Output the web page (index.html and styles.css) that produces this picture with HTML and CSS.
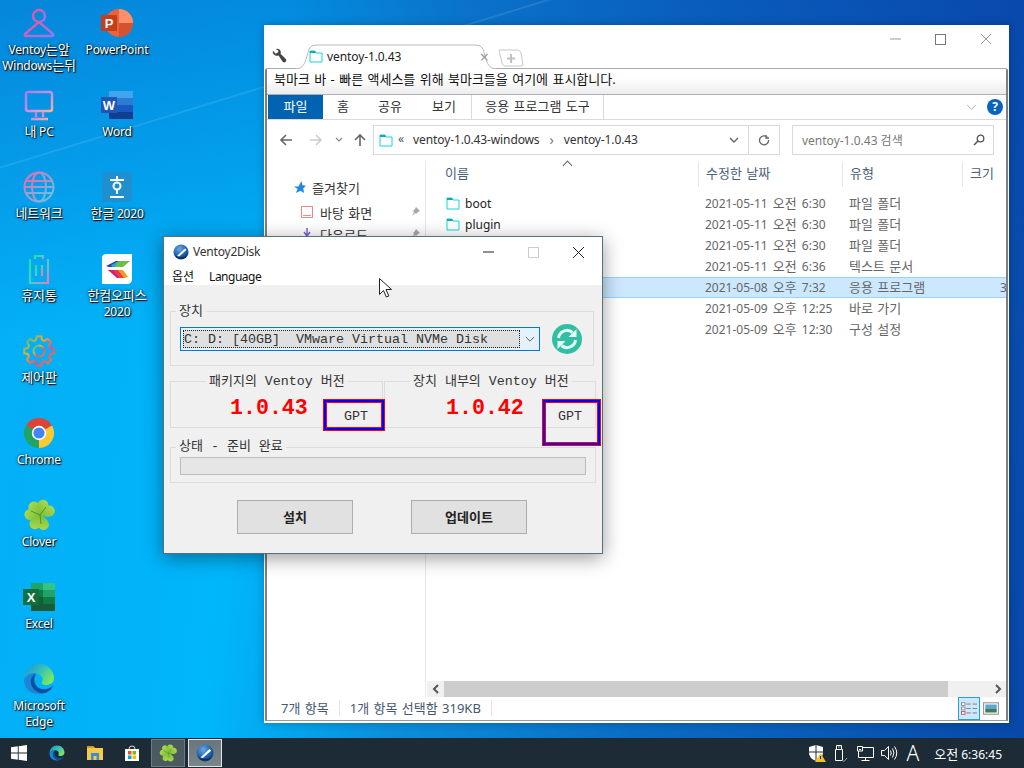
FILE: index.html
```html
<!DOCTYPE html>
<html lang="ko">
<head>
<meta charset="utf-8">
<title>Ventoy2Disk</title>
<link rel="stylesheet" href="styles.css">
</head>
<body>
<svg class="defs" width="0" height="0" aria-hidden="true">
  <defs>
    <linearGradient id="gUser" x1="0" y1="0" x2="1" y2="1"><stop offset="0" stop-color="#f0529a"/><stop offset="1" stop-color="#8d7cf0"/></linearGradient>
    <linearGradient id="gPc" x1="0" y1="0" x2="1" y2="1"><stop offset="0" stop-color="#a57cf5"/><stop offset=".6" stop-color="#d58fe0"/><stop offset="1" stop-color="#f5b39a"/></linearGradient>
    <linearGradient id="gNet" x1="0" y1="0" x2="1" y2="1"><stop offset="0" stop-color="#f06aa8"/><stop offset="1" stop-color="#5fc6e8"/></linearGradient>
    <linearGradient id="gBin" x1="0" y1="0" x2="1" y2="1"><stop offset="0" stop-color="#1fe0a0"/><stop offset=".5" stop-color="#3cd6c8"/><stop offset="1" stop-color="#f07ab0"/></linearGradient>
    <linearGradient id="gGear" x1="0" y1="0" x2="1" y2="1"><stop offset="0" stop-color="#18c0a8"/><stop offset=".35" stop-color="#f0b020"/><stop offset=".65" stop-color="#f04a80"/><stop offset="1" stop-color="#f58a20"/></linearGradient>
    <linearGradient id="gClover" x1="0" y1="0" x2="0" y2="1"><stop offset="0" stop-color="#a8d850"/><stop offset="1" stop-color="#7cc038"/></linearGradient>
    <linearGradient id="gEdgeB" x1="0" y1="0" x2="1" y2=".6"><stop offset="0" stop-color="#1a8fd8"/><stop offset=".55" stop-color="#35c1b8"/><stop offset="1" stop-color="#78e860"/></linearGradient>
    <radialGradient id="gVentoy" cx=".4" cy=".3" r=".8"><stop offset="0" stop-color="#6fa8e0"/><stop offset=".6" stop-color="#1a5fb0"/><stop offset="1" stop-color="#0b2f66"/></radialGradient>
    <symbol id="folder" viewBox="0 0 14 13"><path d="M1 1h5l1 2h6v9H1z" fill="#fff" stroke="#14d6dc"/><path d="M1 1h5l1 2H1z" fill="#14a8b0"/></symbol>
    <symbol id="clover" viewBox="0 0 32 32">
      <path d="M17 16 6 28" stroke="#5c9a24" stroke-width="1.300"/>
      <path d="M17 16C11 14 6 10 7.500 5c1.500-4 7-5 9.500-1.500C19.500 0 25 1 26.500 5c1.500 5-3.500 9-9.500 11z" fill="url(#gClover)" transform="rotate(42 17 16)"/>
      <path d="M17 16C11 14 6 10 7.500 5c1.500-4 7-5 9.500-1.500C19.500 0 25 1 26.500 5c1.500 5-3.500 9-9.500 11z" fill="url(#gClover)" transform="rotate(-62 17 16)"/>
      <path d="M17 16C11 14 6 10 7.500 5c1.500-4 7-5 9.500-1.500C19.500 0 25 1 26.500 5c1.500 5-3.500 9-9.500 11z" fill="url(#gClover)" transform="rotate(185 17 16)"/>
      <path d="M17 16 23 8M17 16 8 12M17 16l1 9" stroke="#4c8a1e" stroke-width=".9"/>
    </symbol>
    <symbol id="edge" viewBox="0 0 32 32">
      <path d="M1 17C1 8 8 1 16 1c9 0 15 7 15 14 0 5-4 7-8 7-3 0-5-1-4-3 2-4-1-8-6-8.500C7 10 3 12 1 17z" fill="url(#gEdgeB)"/>
      <path d="M1 17c2-5 7-7.500 12-6.500-4 1.500-6 6-5 10.500 1 5 6 9 12 9.500-1.500.5-3 .5-4 .5C7 31 1 25 1 17z" fill="#1b86d8"/>
      <path d="M20 30.500C14 30 9 26 8 21c-1-4.500 1-8.500 5-10.500-1.500 3-2.500 7-.5 11 2 3.500 6 5.500 11 4.500 3-.5 5-2 7-4-2 4.500-5 7.500-11 8.500z" fill="#0d4f9e"/>
    </symbol>
    <symbol id="ventoy" viewBox="0 0 16 16">
      <circle cx="8" cy="8" r="7.500" fill="url(#gVentoy)"/>
      <path d="M4 12 12 4.500 13.500 6 6 12.500z" fill="#fff"/>
      <path d="M2 11c3 3 9 3 12 0-2 5-10 5-12 0z" fill="#0a2a5c"/>
    </symbol>
  </defs>
</svg>

<main class="desktop">
  <div class="icon-grid">
    <div class="dicon">
      <svg class="dicon-img" viewBox="0 0 32 32"><circle cx="16" cy="9" r="6" fill="none" stroke="url(#gUser)" stroke-width="2.400"/><path d="M16 15 2 27q-1 2 1 2h26q2 0 1-2z" fill="none" stroke="url(#gUser)" stroke-width="2.400" stroke-linejoin="round"/></svg>
      <span class="dicon-label">Ventoy<span class="k">는앞</span> Windows<span class="k">는뒤</span></span>
    </div>
    <div class="dicon">
      <svg class="dicon-img" viewBox="0 0 32 32"><path d="M28 20V5q0-2-2-2H4Q2 3 2 5v15q0 2 2 2h22q2 0 2-2z" fill="none" stroke="url(#gPc)" stroke-width="2.400" transform="translate(1 0)"/><path d="M13 23v5M20 23v5M8 30h17" stroke="url(#gPc)" stroke-width="2.400" fill="none"/></svg>
      <span class="dicon-label"><span class="k">내</span> PC</span>
    </div>
    <div class="dicon">
      <svg class="dicon-img" viewBox="0 0 32 32"><g fill="none" stroke="url(#gNet)" stroke-width="2"><circle cx="16" cy="16" r="14.500"/><ellipse cx="16" cy="16" rx="7" ry="14.500"/><path d="M16 1.500v29"/><path d="M3 10h26M3 22h26M1.500 16h29"/></g></svg>
      <span class="dicon-label"><span class="k">네트워크</span></span>
    </div>
    <div class="dicon">
      <svg class="dicon-img" viewBox="0 0 32 32"><g fill="none" stroke="url(#gBin)" stroke-width="2.200"><path d="M4 6h24"/><path d="M12 6V3h8v3"/><path d="M7 6v24h18V6"/><path d="M13 12v11M19 12v11"/></g></svg>
      <span class="dicon-label"><span class="k">휴지통</span></span>
    </div>
    <div class="dicon">
      <svg class="dicon-img" viewBox="0 0 32 32"><g fill="none" stroke="url(#gGear)" stroke-width="2"><path d="M13.020 4.890 13.650 1.180H18.350L18.980 4.890 21.750 6.040 24.820 3.870 28.130 7.180 25.960 10.250 27.110 13.020 30.820 13.650V18.350L27.110 18.980 25.960 21.750 28.130 24.820 24.820 28.130 21.750 25.960 18.980 27.110 18.350 30.820H13.650L13.020 27.110 10.250 25.960 7.180 28.130 3.870 24.820 6.040 21.750 4.890 18.980 1.180 18.350V13.650L4.890 13.020 6.040 10.250 3.870 7.180 7.180 3.870 10.250 6.040z" stroke-linejoin="round"/><circle cx="16" cy="16" r="5.500"/></g></svg>
      <span class="dicon-label"><span class="k">제어판</span></span>
    </div>
    <div class="dicon">
      <svg class="dicon-img" viewBox="0 0 32 32"><path d="M16 16 3 8.500A15 15 0 0 1 29 8.500z" fill="#db4437"/><path d="M16 16 29 8.500A15 15 0 0 1 16 31z" fill="#fcc934"/><path d="M16 16V31A15 15 0 0 1 3 8.500z" fill="#1fa463"/><circle cx="16" cy="16" r="7.200" fill="#fff"/><circle cx="16" cy="16" r="5.600" fill="#4285f4"/></svg>
      <span class="dicon-label">Chrome</span>
    </div>
    <div class="dicon">
      <svg class="dicon-img"><use href="#clover"/></svg>
      <span class="dicon-label">Clover</span>
    </div>
    <div class="dicon">
      <svg class="dicon-img" viewBox="0 0 32 32"><rect x="8" y="2" width="24" height="28" fill="#185c37"/><rect x="8" y="2" width="12" height="7" fill="#21a366"/><rect x="20" y="2" width="12" height="7" fill="#33c481"/><rect x="8" y="9" width="12" height="7" fill="#107c41"/><rect x="20" y="9" width="12" height="7" fill="#21a366"/><rect x="20" y="16" width="12" height="7" fill="#107c41"/><rect y="8" width="16" height="16" fill="#0f7040"/><text x="8" y="21" class="letter">X</text></svg>
      <span class="dicon-label">Excel</span>
    </div>
    <div class="dicon">
      <svg class="dicon-img"><use href="#edge"/></svg>
      <span class="dicon-label">Microsoft Edge</span>
    </div>
    <div class="dicon">
      <svg class="dicon-img" viewBox="0 0 32 32"><circle cx="18" cy="16" r="14" fill="#e8643c"/><path d="M18 2a14 14 0 0 1 14 14H18z" fill="#ff8f6b"/><path d="M18 16h14a14 14 0 0 1-14 14z" fill="#d35230"/><rect y="8" width="16" height="16" rx="1" fill="#c43e1c"/><text x="8" y="21" class="letter">P</text></svg>
      <span class="dicon-label">PowerPoint</span>
    </div>
    <div class="dicon">
      <svg class="dicon-img" viewBox="0 0 32 32"><rect x="8" y="2" width="24" height="7" fill="#41a5ee"/><rect x="8" y="9" width="24" height="7" fill="#2b7cd3"/><rect x="8" y="16" width="24" height="7" fill="#185abd"/><rect x="8" y="23" width="24" height="7" fill="#103f91"/><rect y="8" width="16" height="16" fill="#1f56b8"/><text x="8" y="21" class="letter">W</text></svg>
      <span class="dicon-label">Word</span>
    </div>
    <div class="dicon">
      <svg class="dicon-img" viewBox="0 0 32 32"><path d="M5 1h26v25q0 5-5 5H1V5q0-4 4-4z" fill="#1f8fcf"/><path d="M16 5v3M9 9h14" stroke="#fff" stroke-width="2"/><circle cx="16" cy="15" r="3.500" fill="none" stroke="#fff" stroke-width="2"/><path d="M16 19v4M9 26h14" stroke="#fff" stroke-width="2"/></svg>
      <span class="dicon-label"><span class="k">한글</span> 2020</span>
    </div>
    <div class="dicon">
      <svg class="dicon-img" viewBox="0 0 32 32"><path d="M5 1h26v25q0 5-5 5H1V5q0-4 4-4z" fill="#fff"/><path d="M5 13 15 8h7l-8 6H8z" fill="#2e3f9e"/><path d="M10 12 18 8h6l-7 6h-6z" fill="#2e9fd8"/><path d="M16 9 20 8h9l-7 6h-8z" fill="#6cc04a"/><path d="M7 17h10l6 8h-7z" fill="#d81b70"/><path d="M12 17h6l6 8h-6z" fill="#e8384f"/><path d="M17 17h5l5 7-4 1z" fill="#f59a1b"/></svg>
      <span class="dicon-label"><span class="k">한컴오피스</span> 2020</span>
    </div>
  </div>

  <section class="explorer">
    <header class="tabstrip">
      <svg class="wrench" viewBox="0 0 16 16"><path d="M1 3l3 3 2-1 1-2-3-2q4-1 5 2 1 2 0 3l6 6q1 2-1 3-1 1-3-1L7 8Q4 9 2 7 0 5 1 3z" fill="#444"/></svg>
      <div class="tab">
        <svg class="tab-shape" viewBox="0 0 202 25" preserveAspectRatio="none"><path d="M0 25C6 25 9 22 11 15L14 5Q16 1 21 1H181Q186 1 188 5L191 15C193 22 196 25 202 25" fill="#fff" stroke="#bbb"/></svg>
        <svg class="tab-icon"><use href="#folder"/></svg>
        <span class="tab-text">ventoy-1.0.43</span>
        <span class="tab-close">×</span>
      </div>
      <svg class="newtab" viewBox="0 0 26 18"><path d="M1 1h19q2 0 3 3l2 12q0 1-1 1H7q-2 0-3-3z" fill="#fff" stroke="#c8c8c8"/><path d="M13 5v9M9 9.500h8" stroke="#c0c0c0" stroke-width="2"/></svg>
      <div class="wincontrols">
        <svg class="winbtn" viewBox="0 0 45 28"><path d="M17 14h11" stroke="#999"/></svg>
        <svg class="winbtn" viewBox="0 0 45 28"><rect x="17.500" y="9.500" width="10" height="10" fill="none" stroke="#777"/></svg>
        <svg class="winbtn" viewBox="0 0 45 28"><path d="M18 9l10 10M28 9 18 19" stroke="#999"/></svg>
      </div>
    </header>

    <div class="frame">
      <div class="bookmarks k">북마크 바 - 빠른 액세스를 위해 북마크들을 여기에 표시합니다.</div>

      <nav class="ribbon">
        <span class="rtab rtab-file k">파일</span>
        <span class="rtab rtab-home k">홈</span>
        <span class="rtab rtab-share k">공유</span>
        <span class="rtab rtab-view k">보기</span>
        <span class="rtab rtab-tools k">응용 프로그램 도구</span>
        <svg class="ribbon-chevron" viewBox="0 0 12 8"><path d="M1 1l5 5 5-5" fill="none" stroke="#aaa"/></svg>
        <span class="help">?</span>
      </nav>

      <div class="addressrow">
        <svg class="nav-arrow" viewBox="0 0 14 14"><path d="M13 7H2M7 2 2 7l5 5" fill="none" stroke="#666" stroke-width="1.600"/></svg>
        <svg class="nav-arrow nav-forward" viewBox="0 0 14 14"><path d="M1 7h11M7 2l5 5-5 5" fill="none" stroke="#ccc" stroke-width="1.600"/></svg>
        <svg class="nav-down" viewBox="0 0 8 6"><path d="M1 1l3 3 3-3" fill="none" stroke="#888" stroke-width="1.200"/></svg>
        <svg class="nav-arrow nav-up" viewBox="0 0 14 14"><path d="M7 13V2M2 7l5-5 5 5" fill="none" stroke="#666" stroke-width="1.600"/></svg>
        <div class="addressbox">
          <svg class="crumb-icon"><use href="#folder"/></svg>
          <span class="crumb-more">«</span>
          <span class="crumb">ventoy-1.0.43-windows</span>
          <span class="crumb-sep">›</span>
          <span class="crumb">ventoy-1.0.43</span>
          <span class="addr-drop"><svg class="addr-chev" viewBox="0 0 10 7"><path d="M1 1l4 4 4-4" fill="none" stroke="#666" stroke-width="1.400"/></svg></span>
          <span class="addr-refresh"><svg class="addr-ref" viewBox="0 0 12 12"><path d="M9.500 3.500A4.500 4.500 0 1 0 10.500 6M8 1v3h3" fill="none" stroke="#666" stroke-width="1.300"/></svg></span>
        </div>
        <div class="searchbox">
          <span class="search-text">ventoy-1.0.43 검색</span>
          <svg class="search-icon" viewBox="0 0 12 12"><circle cx="7.500" cy="4.500" r="3.300" fill="none" stroke="#555" stroke-width="1.300"/><path d="M5 7 1 11" stroke="#555" stroke-width="1.600"/></svg>
        </div>
      </div>

      <div class="content">
        <aside class="navpane">
          <div class="nav-row nav-fav">
            <svg class="nav-star" viewBox="0 0 14 14"><path d="M9 0l1.200 4.500L14 5l-3 3 1 5-4-2.500L3 13l2-4.500L1 6h5z" fill="#1e88e5"/></svg>
            <span class="k">즐겨찾기</span>
          </div>
          <div class="nav-row nav-sub">
            <svg class="nav-icon" viewBox="0 0 12 12"><rect x=".5" y=".5" width="11" height="11" fill="#fff" stroke="#f08a80"/><path d="M2 9.500h8" stroke="#f08a80"/></svg>
            <span class="k">바탕 화면</span>
            <svg class="nav-pin" viewBox="0 0 10 10"><path d="M6 0l4 4-2 1-2 2-1-1-3 3 2-4-1-1 2-2z" fill="#a8a8a8"/></svg>
          </div>
          <div class="nav-row nav-sub">
            <svg class="nav-icon" viewBox="0 0 12 12"><path d="M6 0v7M3 4l3 4 3-4M1 11h10" fill="none" stroke="#7a5ad0" stroke-width="1.400"/></svg>
            <span class="k">다운로드</span>
            <svg class="nav-pin" viewBox="0 0 10 10"><path d="M6 0l4 4-2 1-2 2-1-1-3 3 2-4-1-1 2-2z" fill="#a8a8a8"/></svg>
          </div>
        </aside>

        <div class="list">
          <span class="sort-arrow"></span>
          <div class="list-head">
            <span class="col-name k">이름</span>
            <span class="col k">수정한 날짜</span>
            <span class="col k">유형</span>
            <span class="col k">크기</span>
          </div>
          <div class="rows">
            <div class="row"><span class="name"><svg class="row-icon"><use href="#folder"/></svg>boot</span><span class="cell date">2021-05-11 <span class="k">오전</span> 6:30</span><span class="cell k">파일 폴더</span><span class="cell"></span></div>
            <div class="row"><span class="name"><svg class="row-icon"><use href="#folder"/></svg>plugin</span><span class="cell date">2021-05-11 <span class="k">오전</span> 6:30</span><span class="cell k">파일 폴더</span><span class="cell"></span></div>
            <div class="row"><span class="name"></span><span class="cell date">2021-05-11 <span class="k">오전</span> 6:30</span><span class="cell k">파일 폴더</span><span class="cell"></span></div>
            <div class="row"><span class="name"></span><span class="cell date">2021-05-11 <span class="k">오전</span> 6:36</span><span class="cell k">텍스트 문서</span><span class="cell"></span></div>
            <div class="row row-selected"><span class="name"></span><span class="cell date">2021-05-08 <span class="k">오후</span> 7:32</span><span class="cell k">응용 프로그램</span><span class="cell cell-size">319KB</span></div>
            <div class="row"><span class="name"></span><span class="cell date">2021-05-09 <span class="k">오후</span> 12:25</span><span class="cell k">바로 가기</span><span class="cell"></span></div>
            <div class="row"><span class="name"></span><span class="cell date">2021-05-09 <span class="k">오후</span> 12:30</span><span class="cell k">구성 설정</span><span class="cell"></span></div>
          </div>
          <div class="hscroll">
            <span class="hs-btn"><svg class="hs-arrow" viewBox="0 0 8 10"><path d="M6 1 2 5l4 4" fill="none" stroke="#555" stroke-width="2"/></svg></span>
            <span class="hs-thumb"></span>
            <span class="hs-btn hs-end"><svg class="hs-arrow" viewBox="0 0 8 10"><path d="M2 1l4 4-4 4" fill="none" stroke="#555" stroke-width="2"/></svg></span>
          </div>
        </div>
      </div>

      <footer class="statusbar">
        <span class="status-item k">7개 항목</span>
        <span class="status-item k">1개 항목 선택함 319KB</span>
        <span class="view-btn view-on">
          <svg class="view-svg" viewBox="0 0 18 14"><rect x=".5" y=".5" width="4" height="3" fill="#fff" stroke="#888"/><rect x=".5" y="5.500" width="4" height="3" fill="#fff" stroke="#888"/><rect x=".5" y="10.500" width="4" height="3" fill="#fff" stroke="#c44"/><path d="M6 2h5M13 2h5M6 7h5M13 7h5M6 12h5M13 12h5" stroke="#777"/></svg>
        </span>
        <span class="view-btn">
          <svg class="view-svg" viewBox="0 0 14 11"><rect x=".5" y=".5" width="13" height="10" fill="#fff" stroke="#999"/><rect x="2" y="2" width="10" height="3.500" fill="#5aa8d8"/><rect x="2" y="5.500" width="10" height="3.500" fill="#3f7a5a"/></svg>
        </span>
      </footer>
    </div>
  </section>

  <section class="dialog">
    <header class="dlg-title">
      <svg class="dlg-logo"><use href="#ventoy"/></svg>
      <span class="dlg-name">Ventoy2Disk</span>
      <div class="wincontrols dlg-controls">
        <svg class="winbtn" viewBox="0 0 45 30"><path d="M16 15h11" stroke="#222"/></svg>
        <svg class="winbtn" viewBox="0 0 45 30"><rect x="16.500" y="10.500" width="10" height="10" fill="none" stroke="#ccc"/></svg>
        <svg class="winbtn" viewBox="0 0 45 30"><path d="M16 10l11 11M27 10 16 21" stroke="#222"/></svg>
      </div>
    </header>
    <div class="dlg-menu"><span>옵션</span><span class="dlg-lang">Language</span></div>
    <div class="dlg-body">
      <div class="group group-device">
        <span class="legend legend-left"><span class="ko">장치</span></span>
        <div class="combo">
          <div class="combo-value">C: D: [40GB]  VMware Virtual NVMe Disk</div>
          <span class="combo-arrow"><svg class="combo-chev" viewBox="0 0 12 8"><path d="M1 1l5 5 5-5" fill="none" stroke="#444"/></svg></span>
        </div>
        <svg class="refresh" viewBox="0 0 30 30"><circle cx="15" cy="15" r="15" fill="#30bfa3"/><g fill="none" stroke="#e6fbf5" stroke-width="3"><path d="M6.500 14A8.500 8.500 0 0 1 20.500 8.500"/><path d="M23.500 16A8.500 8.500 0 0 1 9.500 21.500"/></g><path d="M24.500 5v8h-8z" fill="#e6fbf5"/><path d="M5.500 25v-8h8z" fill="#e6fbf5"/></svg>
      </div>

      <div class="version-row">
        <div class="group group-version">
          <span class="legend legend-pkg"><span class="ko">패키지의</span> Ventoy <span class="ko">버전</span></span>
          <div class="version version-pkg">1.0.43</div>
          <div class="gpt gpt-pkg">GPT</div>
        </div>
        <div class="group group-version">
          <span class="legend legend-dev"><span class="ko">장치</span> <span class="ko">내부의</span> Ventoy <span class="ko">버전</span></span>
          <div class="version version-dev">1.0.42</div>
          <div class="gpt gpt-dev">GPT</div>
        </div>
      </div>

      <div class="group group-status">
        <span class="legend legend-left legend-status"><span class="ko">상태</span> - <span class="ko">준비</span> <span class="ko">완료</span></span>
        <div class="progress"></div>
      </div>

      <div class="dlg-buttons">
        <button class="dlg-btn" type="button">설치</button>
        <button class="dlg-btn" type="button">업데이트</button>
      </div>
    </div>
  </section>

  <svg class="cursor" viewBox="0 0 13 20"><path d="M.5.5v16l4-4 2.800 6.500 2.500-1L7 11.500h5.500z" fill="#fff" stroke="#222" stroke-width="1"/></svg>
</main>

<footer class="taskbar">
  <span class="tb-cell tb-start">
    <svg class="tb-icon" viewBox="0 0 16 16"><path d="M0 2.300 6.800 1.300V7.500H0zM7.700 1.200 16 0V7.500H7.700zM0 8.400H6.800V14.700L0 13.700zM7.700 8.400H16V16L7.700 14.800z" fill="#fff"/></svg>
  </span>
  <span class="tb-cell tb-edge"><svg class="tb-icon"><use href="#edge"/></svg></span>
  <span class="tb-cell">
    <svg class="tb-icon" viewBox="0 0 16 16"><path d="M0 1h6l2 2h8v12H0z" fill="#f8c94a"/><path d="M0 1h6l2 2H0z" fill="#d99a1e"/><path d="M4 15V8h8v7h-2.500v-4h-3v4z" fill="#3a8fd8"/></svg>
  </span>
  <span class="tb-cell">
    <svg class="tb-icon" viewBox="0 0 16 16"><path d="M1 4h14v12H1z" fill="#fff"/><path d="M5 4q0-3 3-3t3 3" fill="none" stroke="#ddd"/><rect x="4" y="6" width="3.500" height="3.500" fill="#f25022"/><rect x="8.500" y="6" width="3.500" height="3.500" fill="#7fba00"/><rect x="4" y="10.500" width="3.500" height="3.500" fill="#00a4ef"/><rect x="8.500" y="10.500" width="3.500" height="3.500" fill="#ffb900"/></svg>
  </span>
  <span class="tb-app tb-app-idle"><svg class="tb-icon tb-icon-lg"><use href="#clover"/></svg></span>
  <span class="tb-app tb-app-active"><svg class="tb-icon tb-icon-lg"><use href="#ventoy"/></svg></span>
  <div class="tray">
    <svg class="tray-icon" viewBox="0 0 18 18"><path d="M8 1 1 3v6q0 5 7 8 7-3 7-8V3z" fill="#fff"/><path d="M8 1v16M1 8h14" stroke="#1c2b36"/><path d="M12.500 9 18 18H7z" fill="#f8c21c"/><path d="M12.500 12v3" stroke="#222"/></svg>
    <svg class="tray-icon" viewBox="0 0 18 18"><g fill="none" stroke="#fff"><path d="M3.500 5.500h7v11h-7zM4.500 5.500v-4h5v4"/><path d="M6 3h.8M7.500 3h.8"/></g><path d="M10 16l2 1.500 3-3.500" fill="none" stroke="#9aa4a8"/></svg>
    <svg class="tray-icon" viewBox="0 0 18 18"><g fill="none" stroke="#fff"><path d="M1.500 2.500h5v4.500h-5zM3 5.500h2"/><path d="M6.500 3.500h11v10h-15V7"/><path d="M9.500 13.500v3M5.500 16.500h8"/></g></svg>
    <svg class="tray-icon" viewBox="0 0 18 18"><g fill="none" stroke="#fff"><path d="M1.500 6.500h3l4-4v13l-4-4h-3z"/><path d="M10.500 6.500q1.500 2.500 0 5M12.500 4.500q3 4.500 0 9M14.500 2.500q4.500 6.500 0 13"/></g></svg>
    <span class="tray-ime">A</span>
    <span class="clock"><span class="k">오전</span> 6:36:45</span>
  </div>
</footer>
</body>
</html>
```
FILE: styles.css
```css
* { box-sizing: border-box; }
html, body { height: 100%; }
body {
  margin: 0;
  width: 1024px;
  height: 768px;
  overflow: hidden;
  display: flex;
  flex-direction: column;
  font-family: "Noto Sans", "Noto Sans CJK KR", sans-serif;
  font-size: 12px;
  color: #222;
}
.defs { position: absolute; }
.k { font-size: 13px; word-spacing: 1px; }

/* desktop */
.desktop {
  position: relative;
  flex: 1;
  min-height: 0;
  background:
    linear-gradient(163deg, transparent 0, transparent 159px, rgba(255,255,255,.13) 160px, transparent 162px, transparent 100%),
    linear-gradient(180deg, rgba(8,60,170,.35) 0, rgba(8,60,170,0) 45%),
    linear-gradient(96deg, #04aef5 0, #00b6fb 26%, #0b8fdb 42%, #0a6cc4 65%, #0848a8 100%);
}
.icon-grid {
  display: grid;
  grid-template-columns: 78px 78px;
  grid-auto-flow: column;
  grid-template-rows: repeat(9, 82px);
  padding-top: 7px;
}
.dicon { display: flex; flex-direction: column; align-items: center; }
.dicon-img { width: 32px; height: 32px; flex: none; overflow: visible; }
.dicon-label {
  margin-top: 3px;
  width: 78px;
  text-align: center;
  color: #fff;
  line-height: 16px;
  font-size: 12px;
  letter-spacing: -.2px;
  text-shadow: 1px 1px 1px #000, 0 0 3px rgba(0,0,0,.8);
}
.dicon-label .k { line-height: 10px; }
.letter { font-family: "Liberation Sans", sans-serif; font-size: 13px; font-weight: 700; fill: #fff; text-anchor: middle; }

/* explorer window */
.explorer {
  position: absolute;
  left: 264px;
  top: 25px;
  width: 745px;
  height: 698px;
  padding: 0 1px 2px;
  background: #fff;
  display: flex;
  flex-direction: column;
  box-shadow: 0 0 8px rgba(0,0,0,.25);
}
.tabstrip { height: 43px; flex: none; display: flex; position: relative; padding-left: 7px; }
.wrench { width: 15px; height: 15px; margin-top: 23px; flex: none; }
.tab {
  position: relative;
  z-index: 1;
  width: 202px;
  height: 25px;
  margin: 19px 0 -1px 8px;
  display: flex;
  align-items: center;
  padding-left: 14px;
  flex: none;
}
.tab-shape { position: absolute; inset: 0; width: 100%; height: 100%; z-index: -1; }
.tab-icon { width: 14px; height: 13px; flex: none; }
.tab-text { margin-left: 4px; color: #222; letter-spacing: -.1px; }
.tab-close { margin-left: auto; margin-right: 8px; color: #999; font-size: 16px; line-height: 1; }
.newtab { width: 26px; height: 18px; margin: 24px 0 0 1px; flex: none; }
.wincontrols { margin-left: auto; display: flex; flex: none; }
.winbtn { width: 45px; height: 28px; display: block; }

.frame {
  flex: 1;
  min-height: 0;
  display: flex;
  flex-direction: column;
  border: 2px solid #7f7f7f;
  border-top: 1px solid #aaa;
  border-bottom: 1px solid #9a9a9a;
  border-radius: 3px 3px 0 0;
  background: #fff;
}
.bookmarks {
  height: 26px;
  flex: none;
  padding-left: 7px;
  line-height: 21px;
  background: linear-gradient(#fff, #fff 35%, #ececec);
  border-bottom: 1px solid #aeaeb4;
  color: #111;
}
.ribbon {
  height: 25px;
  flex: none;
  display: flex;
  align-items: stretch;
  padding-left: 1px;
  border-bottom: 1px solid #dadada;
}
.rtab { display: flex; align-items: center; justify-content: center; color: #333; padding-bottom: 3px; }
.rtab-file { width: 55px; background: #0063b1; color: #fff; }
.rtab-home { width: 40px; }
.rtab-share { width: 54px; }
.rtab-view { width: 55px; border-right: 1px solid #dadada; }
.rtab-tools { width: 132px; border-right: 1px solid #dadada; }
.ribbon-chevron { width: 11px; height: 7px; margin: 9px 0 0 auto; }
.help {
  width: 16px;
  height: 16px;
  margin: 4px 3px 0 10px;
  border-radius: 50%;
  background: #0a63c0;
  color: #fff;
  font-weight: 700;
  line-height: 16px;
  text-align: center;
}

.addressrow { height: 37px; flex: none; display: flex; align-items: flex-start; padding: 5px 0 0 12px; }
.nav-arrow { width: 14px; height: 14px; margin-top: 8px; flex: none; }
.nav-forward { margin-left: 16px; }
.nav-down { width: 8px; height: 6px; margin: 12px 0 0 12px; flex: none; }
.nav-up { margin-left: 10px; }
.addressbox {
  width: 407px;
  height: 30px;
  margin-left: 6px;
  border: 1px solid #d9d9d9;
  display: flex;
  align-items: center;
  padding-left: 5px;
  flex: none;
  color: #333;
}
.crumb { letter-spacing: -.12px; line-height: 16px; margin-top: -1px; }
.crumb-icon { width: 14px; height: 13px; flex: none; }
.crumb-more { margin: -3px 9px 0 5px; font-size: 12px; line-height: 1; color: #555; }
.crumb-sep { margin: 0 10px; color: #777; font-size: 14px; line-height: 1; }
.addr-drop { margin-left: auto; width: 30px; height: 100%; display: flex; align-items: center; justify-content: center; border-right: 1px solid #d9d9d9; }
.addr-chev { width: 10px; height: 7px; }
.addr-refresh { width: 30px; display: flex; justify-content: center; }
.addr-ref { width: 12px; height: 12px; }
.searchbox {
  width: 202px;
  height: 30px;
  margin-left: 12px;
  border: 1px solid #d9d9d9;
  display: flex;
  align-items: center;
  padding: 0 8px 0 9px;
  flex: none;
  color: #777;
}
.search-icon { width: 12px; height: 12px; margin-left: auto; }

.content { flex: 1; min-height: 0; display: flex; }
.navpane { width: 159px; flex: none; padding-top: 15px; border-right: 1px solid #e8e8e8; margin-top: 4px; }
.nav-row { height: 22px; display: flex; align-items: center; color: #333; }
.nav-fav { padding-left: 26px; margin-bottom: 3px; }
.nav-star { width: 13px; height: 13px; margin-right: 6px; }
.nav-sub { padding-left: 34px; }
.nav-icon { width: 12px; height: 12px; margin-right: 7px; flex: none; }
.nav-pin { width: 10px; height: 10px; margin-left: auto; margin-right: 5px; }

.list { flex: 1; min-width: 0; display: flex; flex-direction: column; position: relative; }
.sort-arrow {
  position: absolute;
  left: 138px;
  top: 5px;
  width: 7px;
  height: 7px;
  border-left: 1px solid #666;
  border-top: 1px solid #666;
  transform: rotate(45deg);
}
.list-head {
  display: grid;
  grid-template-columns: 272px 144px 120px 1fr;
  height: 25px;
  margin-top: 5px;
  flex: none;
  color: #4c607a;
}
.col-name { padding-left: 19px; line-height: 23px; }
.col { padding-left: 7px; line-height: 23px; border-left: 1px solid #e5e5e5; }
.rows { flex: 1; padding-top: 6px; }
.row {
  display: grid;
  grid-template-columns: 271px 144px 120px 1fr;
  height: 21px;
  margin-left: 1px;
  line-height: 19px;
  color: #666;
  border: 1px solid transparent;
  border-width: 1px 0;
}
.row-selected { background: #cce8ff; border-color: #99d1ff; }
.name { display: flex; align-items: center; padding-left: 19px; color: #222; }
.row-icon { width: 14px; height: 13px; margin-right: 5px; flex: none; }
.cell { padding-left: 7px; white-space: nowrap; overflow: hidden; }
.date { word-spacing: 2px; }
.cell-size { padding-left: 38px; }
.hscroll { height: 16px; flex: none; margin: 0 0 0 1px; display: flex; background: #f0f0f0; }
.hs-btn { width: 17px; display: flex; align-items: center; justify-content: center; flex: none; }
.hs-end { margin-left: auto; }
.hs-arrow { width: 8px; height: 10px; }
.hs-thumb { width: 504px; background: #cdcdcd; }

.statusbar { height: 23px; flex: none; display: flex; align-items: center; padding: 0 0 0 14px; color: #45586e; }
.status-item { padding: 0 10px 0 0; margin: -2px 10px 0 0; border-right: 1px solid #e5e5e5; line-height: 16px; }
.view-btn { width: 22px; height: 23px; display: flex; align-items: center; justify-content: center; border: 1px solid transparent; }
.view-on { margin-left: auto; background: #cce8ff; border-color: #26a0da; }
.view-btn:last-child { margin: 0 6px 0 2px; width: 18px; }
.view-svg { width: 16px; height: 13px; }

/* ventoy dialog */
.dialog {
  position: absolute;
  left: 163px;
  top: 236px;
  width: 440px;
  height: 318px;
  z-index: 2;
  display: flex;
  flex-direction: column;
  background: #f0f0f0;
  border: 1px solid #55707f;
  box-shadow: 0 4px 18px rgba(0,0,0,.4);
}
.dlg-title { height: 33px; flex: none; display: flex; align-items: center; background: #fff; padding: 0 0 4px 9px; color: #333; }
.dlg-logo { width: 16px; height: 16px; flex: none; }
.dlg-name { margin-left: 4px; letter-spacing: -.2px; }
.dlg-controls { margin-left: auto; height: 30px; }
.dlg-controls .winbtn { height: 30px; }
.dlg-menu { height: 15px; flex: none; display: flex; gap: 15px; align-items: center; padding: 0 0 3px 8px; background: #fff; color: #111; }
.dlg-lang { letter-spacing: -.5px; }
.dlg-body { flex: 1; display: flex; flex-direction: column; align-items: flex-start; padding: 26px 0 0 6px; }

.group { position: relative; border: 1px solid #dcdcdc; flex: none; }
.legend {
  position: absolute;
  top: -10px;
  background: #f0f0f0;
  padding: 0 3px;
  font-family: "Liberation Mono", "Noto Sans CJK KR", monospace;
  font-size: 13.33px;
  line-height: 16px;
  white-space: pre;
  color: #333;
}
.ko { font-size: 13px; font-family: "Noto Sans CJK KR", sans-serif; }
.legend-left { left: 5px; }
.legend-pkg { left: 35px; }
.legend-dev { left: 25px; }
.legend-status { top: -11px; }

.group-device { width: 424px; height: 55px; display: flex; align-items: flex-start; padding: 15px 0 0 9px; }
.combo { width: 360px; height: 24px; border: 1px solid #0078d7; display: flex; background: #e5f1fb; flex: none; }
.combo-value {
  flex: 1;
  margin: 2px 1px 2px 2px;
  border: 1px dotted #222;
  background: #e0e0e0;
  font-family: "Liberation Mono", monospace;
  font-size: 13.33px;
  line-height: 17px;
  white-space: pre;
  color: #333;
}
.combo-arrow { width: 18px; display: flex; align-items: center; justify-content: center; flex: none; }
.combo-chev { width: 10px; height: 7px; }
.refresh { width: 30px; height: 30px; margin: -3px 0 0 12px; flex: none; }

.version-row { display: grid; grid-template-columns: 213px 212px; gap: 1px; margin-top: 15px; }
.group-version { height: 47px; }
.version {
  position: absolute;
  top: 14px;
  font-family: "Liberation Mono", monospace;
  font-weight: 700;
  font-size: 21.6px;
  line-height: 25px;
  color: #f00;
}
.version-pkg { left: 59px; }
.version-dev { left: 61px; }
.gpt {
  position: absolute;
  top: 17px;
  z-index: 1;
  border: 1px solid #f00;
  box-shadow: inset 0 0 0 2px #00f, inset 0 0 0 3px #f00;
  font-family: "Liberation Mono", monospace;
  font-size: 13.33px;
  line-height: 15px;
  padding-top: 9px;
  text-align: center;
  color: #333;
}
.gpt-pkg { left: 152px; width: 62px; height: 32px; padding-left: 4px; }
.gpt-dev { left: 157px; width: 59px; height: 47px; padding-right: 3px; }

.group-status { width: 426px; height: 36px; margin-top: 19px; padding: 9px 9px 0; }
.progress { height: 18px; background: #e6e6e6; border: 1px solid #bcbcbc; }

.dlg-buttons { display: flex; gap: 58px; margin: 17px 0 0 67px; }
.dlg-btn {
  width: 116px;
  height: 34px;
  padding: 0 0 2px;
  border: 1px solid #adadad;
  background: #e1e1e1;
  font: 700 13px "Noto Sans CJK KR", sans-serif;
  color: #222;
}

.cursor { position: absolute; left: 379px; top: 278px; width: 13px; height: 20px; z-index: 3; }

/* taskbar */
.taskbar { height: 30px; flex: none; display: flex; align-items: center; background: #1c2b36; color: #fff; }
.tb-cell { width: 37px; display: flex; justify-content: center; flex: none; }
.tb-edge { width: 39px; }
.tb-icon { width: 16px; height: 16px; display: block; }
.tb-icon-lg { width: 18px; height: 18px; }
.tb-app { width: 34px; height: 28px; display: flex; align-items: center; justify-content: center; flex: none; }
.tb-app-idle { margin-left: 1px; background: #4a5a60; border: 1px solid #6e7c82; }
.tb-app-active { margin-left: 3px; background: linear-gradient(#6a767b, #7a868a); border: 1px solid #e4e4e4; }
.tray { margin-left: auto; display: flex; align-items: center; padding-right: 22px; }
.tray-icon { width: 18px; height: 18px; margin-right: 6px; flex: none; }
.tray-ime { font-size: 21px; line-height: 1; margin: 0 15px 0 2px; font-weight: 300; }
.clock { font-size: 12px; color: #fff; }
```
